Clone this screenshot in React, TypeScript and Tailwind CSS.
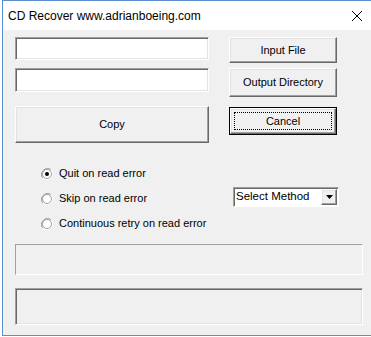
const raised =
  'border border-t-white border-l-white border-b-[#696969] border-r-[#696969] shadow-[inset_-1px_-1px_0_#a0a0a0,inset_1px_1px_0_#e3e3e3] bg-[#f0f0f0]';
const sunken =
  'border border-t-[#a0a0a0] border-l-[#a0a0a0] border-b-white border-r-white shadow-[inset_1px_1px_0_#696969,inset_-1px_-1px_0_#e3e3e3]';

const Radio = ({ checked }: { checked?: boolean }) => (
  <svg width="12" height="12" viewBox="0 0 12 12" className="shrink-0">
    <path d="M10.2 1.8A6 6 0 0 0 1.8 10.2" fill="none" stroke="#a0a0a0" strokeWidth="1" />
    <path d="M1.8 10.2A6 6 0 0 0 10.2 1.8" fill="none" stroke="#ffffff" strokeWidth="1" />
    <circle cx="6" cy="6" r="4.5" fill="#ffffff" stroke="#696969" strokeWidth="0.6" />
    {checked && <circle cx="6" cy="6" r="2" fill="#000000" />}
  </svg>
);

const RadioRow = ({ label, checked }: { label: string; checked?: boolean }) => (
  <div className="flex items-center h-[25px]">
    <Radio checked={checked} />
    <span className="ml-[6px]">{label}</span>
  </div>
);

export default function App() {
  return (
    <div
      className="w-[371px] h-[337px] overflow-hidden bg-white pl-[2px]"
      style={{ fontFamily: '"Liberation Sans", Arial, sans-serif' }}
    >
      <div className="h-[336px] border-l border-t border-b border-[#5b8fd0] flex flex-col">
        {/* title bar */}
        <div className="h-[29px] shrink-0 bg-white flex items-center justify-between pl-[5px] pr-[8px] text-[12px] text-black">
          <span>CD Recover www.adrianboeing.com</span>
          <svg width="12" height="12" viewBox="0 0 12 12">
            <path d="M1 1L11 11M11 1L1 11" stroke="#000" strokeWidth="1" />
          </svg>
        </div>

        {/* client */}
        <div className="flex-1 bg-[#f0f0f0] pl-[12px] pt-[7px] text-[11px] text-black">
          <div className="flex">
            <div className="w-[194px] flex flex-col">
              <div className={`h-[23px] bg-white ${sunken}`} />
              <div className={`h-[24px] mt-[8px] bg-white ${sunken}`} />
              <div className={`h-[37px] mt-[14px] flex items-center justify-center ${raised}`}>Copy</div>
            </div>
            <div className="w-[108px] ml-[20px] flex flex-col">
              <div className={`h-[26px] flex items-center justify-center ${raised}`}>Input File</div>
              <div className={`h-[29px] mt-[5px] flex items-center justify-center ${raised}`}>Output Directory</div>
              <div className="h-[28px] mt-[10px] border border-black">
                <div className={`h-full p-[3px] ${raised}`}>
                  <div className="h-full border border-dotted border-black flex items-center justify-center">
                    Cancel
                  </div>
                </div>
              </div>
            </div>
          </div>

          <div className="flex mt-[18px]">
            <div className="ml-[26px] w-[192px] flex flex-col">
              <RadioRow label="Quit on read error" checked />
              <RadioRow label="Skip on read error" />
              <RadioRow label="Continuous retry on read error" />
            </div>
            <div className="mt-[26px] w-[106px] h-[20px] flex items-center bg-white border border-t-[#a0a0a0] border-l-[#a0a0a0] border-b-white border-r-white shadow-[inset_1px_1px_0_#696969]">
              <span className="flex-1 pl-[2px] text-[11.5px]">Select Method</span>
              <div className={`w-[16px] h-[16px] mr-[1px] flex items-center justify-center ${raised}`}>
                <svg width="7" height="4" viewBox="0 0 7 4">
                  <path d="M0 0H7L3.5 4Z" fill="#000" />
                </svg>
              </div>
            </div>
          </div>

          <div className="w-[348px] h-[31px] mt-[8px] border border-t-[#a0a0a0] border-l-[#a0a0a0] border-b-white border-r-white" />
          <div className={`w-[348px] h-[37px] mt-[13px] ${sunken}`} />
        </div>
      </div>
    </div>
  );
}
